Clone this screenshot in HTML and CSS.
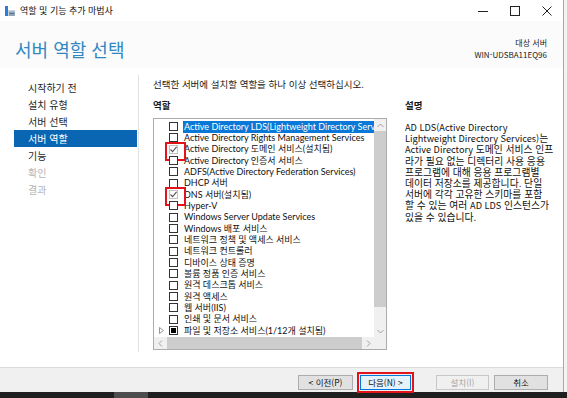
FILE: index.html
```html
<!DOCTYPE html>
<html lang="ko">
<head>
<meta charset="utf-8">
<title>역할 및 기능 추가 마법사</title>
<link rel="stylesheet" href="styles.css">
</head>
<body>
<div class="screen">
  <div class="window">
    <div class="titlebar">
      <svg class="appicon" width="10" height="10" viewBox="0 0 10 10">
        <rect x="0" y="0" width="3" height="10" fill="#2a7fd4"/>
        <rect x="3.5" y="4" width="6.5" height="6" fill="#8fa3b8"/>
        <rect x="3.5" y="4" width="6.5" height="1.5" fill="#c9d5e1"/>
        <rect x="4.5" y="7" width="4.5" height="1" fill="#5e738a"/>
      </svg>
      <span class="title">역할 및 기능 추가 마법사</span>
      <div class="controls">
        <span class="ctl"><svg width="10" height="10" viewBox="0 0 10 10"><line x1="0" y1="5.5" x2="10" y2="5.5" stroke="#222" stroke-width="1"/></svg></span>
        <span class="ctl"><svg width="10" height="10" viewBox="0 0 10 10"><rect x="0.5" y="0.5" width="9" height="9" fill="none" stroke="#222" stroke-width="1"/></svg></span>
        <span class="ctl"><svg width="10" height="10" viewBox="0 0 10 10"><path d="M0.5 0.5 L9.5 9.5 M9.5 0.5 L0.5 9.5" stroke="#222" stroke-width="1"/></svg></span>
      </div>
    </div>

    <div class="header">
      <h1 class="page-title">서버 역할 선택</h1>
      <div class="target">
        <div>대상 서버</div>
        <div>WIN-UDSBA11EQ96</div>
      </div>
    </div>

    <div class="body">
      <nav class="nav">
        <div class="nav-item">시작하기 전</div>
        <div class="nav-item">설치 유형</div>
        <div class="nav-item">서버 선택</div>
        <div class="nav-item active">서버 역할</div>
        <div class="nav-item">기능</div>
        <div class="nav-item disabled">확인</div>
        <div class="nav-item disabled">결과</div>
      </nav>

      <div class="main">
        <p class="instr">선택한 서버에 설치할 역할을 하나 이상 선택하십시오.</p>
        <div class="cols">
          <div class="roles">
            <div class="label">역할</div>
            <div class="listbox">
              <div class="listarea">
                <div class="rows">
                  <div class="row"><span class="exp"></span><span class="cb"></span><span class="txt sel">Active Directory LDS(Lightweight Directory Services)</span></div>
                  <div class="row"><span class="exp"></span><span class="cb"></span><span class="txt">Active Directory Rights Management Services</span></div>
                  <div class="row"><span class="exp"></span><span class="cb checked marked"><svg width="9" height="9" viewBox="0 0 9 9"><path d="M1.5 4.5 L3.6 6.7 L7.6 1.8" fill="none" stroke="#555" stroke-width="1.1"/></svg></span><span class="txt">Active Directory 도메인 서비스(설치됨)</span></div>
                  <div class="row"><span class="exp"></span><span class="cb"></span><span class="txt">Active Directory 인증서 서비스</span></div>
                  <div class="row"><span class="exp"></span><span class="cb"></span><span class="txt">ADFS(Active Directory Federation Services)</span></div>
                  <div class="row"><span class="exp"></span><span class="cb"></span><span class="txt">DHCP 서버</span></div>
                  <div class="row"><span class="exp"></span><span class="cb checked marked"><svg width="9" height="9" viewBox="0 0 9 9"><path d="M1.5 4.5 L3.6 6.7 L7.6 1.8" fill="none" stroke="#555" stroke-width="1.1"/></svg></span><span class="txt">DNS 서버(설치됨)</span></div>
                  <div class="row"><span class="exp"></span><span class="cb"></span><span class="txt">Hyper-V</span></div>
                  <div class="row"><span class="exp"></span><span class="cb"></span><span class="txt">Windows Server Update Services</span></div>
                  <div class="row"><span class="exp"></span><span class="cb"></span><span class="txt">Windows 배포 서비스</span></div>
                  <div class="row"><span class="exp"></span><span class="cb"></span><span class="txt">네트워크 정책 및 액세스 서비스</span></div>
                  <div class="row"><span class="exp"></span><span class="cb"></span><span class="txt">네트워크 컨트롤러</span></div>
                  <div class="row"><span class="exp"></span><span class="cb"></span><span class="txt">디바이스 상태 증명</span></div>
                  <div class="row"><span class="exp"></span><span class="cb"></span><span class="txt">볼륨 정품 인증 서비스</span></div>
                  <div class="row"><span class="exp"></span><span class="cb"></span><span class="txt">원격 데스크톱 서비스</span></div>
                  <div class="row"><span class="exp"></span><span class="cb"></span><span class="txt">원격 액세스</span></div>
                  <div class="row"><span class="exp"></span><span class="cb"></span><span class="txt">웹 서버(IIS)</span></div>
                  <div class="row"><span class="exp"></span><span class="cb"></span><span class="txt">인쇄 및 문서 서비스</span></div>
                  <div class="row"><span class="exp"><svg width="5" height="7" viewBox="0 0 5 7"><path d="M0.5 0.5 L4.5 3.5 L0.5 6.5 Z" fill="none" stroke="#8a8a8a" stroke-width="0.9"/></svg></span><span class="cb partial"><span class="fill"></span></span><span class="txt">파일 및 저장소 서비스(1/12개 설치됨)</span></div>
                </div>
                <div class="vscroll">
                  <span class="sbtn"><svg width="7" height="5" viewBox="0 0 7 5"><path d="M0.5 4 L3.5 1 L6.5 4" fill="none" stroke="#a0a0a0" stroke-width="1"/></svg></span>
                  <span class="vthumb"></span>
                  <span class="vtrack"></span>
                  <span class="sbtn"><svg width="7" height="5" viewBox="0 0 7 5"><path d="M0.5 1 L3.5 4 L6.5 1" fill="none" stroke="#a0a0a0" stroke-width="1"/></svg></span>
                </div>
              </div>
              <div class="hscrollrow">
                <span class="sbtn"><svg width="5" height="7" viewBox="0 0 5 7"><path d="M4 0.5 L1 3.5 L4 6.5" fill="none" stroke="#a0a0a0" stroke-width="1"/></svg></span>
                <span class="hthumb"></span>
                <span class="sbtn"><svg width="5" height="7" viewBox="0 0 5 7"><path d="M1 0.5 L4 3.5 L1 6.5" fill="none" stroke="#a0a0a0" stroke-width="1"/></svg></span>
                <span class="corner"></span>
              </div>
            </div>
          </div>
          <div class="desc">
            <div class="label">설명</div>
            <p class="desc-text"><span class="lat">AD LDS(Active Directory</span><br><span class="lat">Lightweight Directory Services)</span>는<br><span class="lat">Active Directory </span>도메인 서비스 인프<br>라가 필요 없는 디렉터리 사용 응용<br>프로그램에 대해 응용 프로그램별<br>데이터 저장소를 제공합니다. 단일<br>서버에 각각 고유한 스키마를 포함<br>할 수 있는 여러 <span class="lat">AD LDS</span> 인스턴스가<br>있을 수 있습니다.</p>
          </div>
        </div>
      </div>
    </div>

    <div class="footer">
      <button class="btn b-prev">&lt; 이전(P)</button>
      <button class="btn b-next">다음(N) &gt;</button>
      <button class="btn b-install" disabled>설치(I)</button>
      <button class="btn b-cancel">취소</button>
    </div>
  </div>
  <div class="edge"></div>
</div>
<div class="taskbar"><span class="task-item"></span></div>
</body>
</html>
```
FILE: styles.css
```css
* { box-sizing: border-box; }
html, body { margin: 0; padding: 0; }
body {
  width: 567px;
  height: 398px;
  overflow: hidden;
  background: #f3f3f3;
  font-family: "Noto Sans CJK KR", "Noto Sans", sans-serif;
  font-size: 9px;
  color: #1a1a1a;
}
.screen { display: flex; height: 392px; }
.window {
  width: 564px;
  height: 392px;
  border-right: 1px solid #a8a8a8;
  background: #fff;
  display: flex;
  flex-direction: column;
}
.edge { flex: 1; background: #f3f3f3; }

/* title bar */
.titlebar {
  height: 21px;
  display: flex;
  align-items: center;
  background: #fff;
}
.appicon { margin-left: 5px; margin-top: 1px; }
.title { margin-left: 5px; font-size: 9px; color: #111; }
.controls { margin-left: auto; display: flex; }
.ctl {
  width: 32px;
  height: 21px;
  display: flex;
  align-items: center;
  justify-content: center;
}

/* header */
.header {
  height: 47px;
  display: flex;
  justify-content: space-between;
  background: #fbfbfb;
}
.page-title {
  margin: 0;
  padding: 16px 0 0 15px;
  font-size: 18px;
  line-height: 24px;
  font-weight: normal;
  color: #2f87c3;
}
.target {
  padding: 16px 16px 0 0;
  text-align: right;
  line-height: 12px;
  font-size: 8px;
  color: #222;
}

/* body */
.body {
  height: 299px;
  display: flex;
}
.nav {
  width: 139px;
  margin: 7px 0 15px;
  padding-top: 4px;
  border-right: 1px solid #e2e2e2;
}
.nav-item {
  margin-left: 14px;
  width: 123px;
  height: 17px;
  line-height: 17px;
  padding-left: 14px;
  font-size: 10px;
  color: #1e1e1e;
}
.nav-item.active { background: #0a66b3; color: #fff; }
.nav-item.disabled { color: #b5b5b5; }

.main {
  flex: 1;
  padding: 10px 0 0 14px;
}
.instr { margin: 0; line-height: 12px; font-size: 9.5px; }
.cols { display: flex; margin-top: 9px; }
.label { line-height: 12px; font-weight: bold; font-size: 9.5px; }
.roles { width: 234px; flex: none; }
.listbox {
  margin-top: 7px;
  height: 232px;
  border: 1px solid #acacac;
  display: flex;
  flex-direction: column;
}
.listarea { height: 218px; display: flex; }
.rows {
  flex: 1;
  min-width: 0;
  overflow: hidden;
  padding-top: 2px;
  white-space: nowrap;
  font-family: Lato, "Noto Sans CJK KR", sans-serif;
  font-size: 9px;
}
.row {
  height: 11.33px;
  display: flex;
  align-items: center;
  padding-left: 4px;
}
.exp {
  flex: none;
  width: 11px;
  height: 9px;
  display: flex;
  align-items: center;
  padding-left: 1px;
}
.cb {
  position: relative;
  width: 9px;
  height: 9px;
  border: 1px solid #333;
  background: #fff;
  flex: none;
  display: flex;
  align-items: center;
  justify-content: center;
}
.cb.checked { border-color: #c4c4c4; }
.cb svg { position: absolute; left: -1px; top: -1px; }
.cb.marked::after {
  content: "";
  position: absolute;
  left: -5px;
  top: -4px;
  width: 17px;
  height: 15px;
  border: 2px solid #e3131b;
}
.cb.partial .fill { width: 5px; height: 5px; background: #000; }
.txt {
  flex: none;
  margin-left: 5px;
  padding: 0 1px;
  line-height: 12px;
  color: #111;
}
.txt.sel { background: #0a78d7; color: #fff; }

.vscroll {
  width: 12px;
  flex: none;
  display: flex;
  flex-direction: column;
  background: #f0f0f0;
}
.sbtn {
  width: 12px;
  height: 12px;
  flex: none;
  display: flex;
  align-items: center;
  justify-content: center;
  background: #f0f0f0;
}
.vthumb { height: 176px; background: #cdcdcd; }
.vtrack { flex: 1; }
.hscrollrow {
  height: 12px;
  display: flex;
  background: #f0f0f0;
}
.hthumb { flex: 1; background: #cdcdcd; margin-left: 1px; }
.corner { width: 12px; background: #f0f0f0; }

.desc { margin-left: 18px; }
.desc-text {
  margin: 11px 0 0;
  line-height: 11.2px;
  font-size: 9.8px;
  white-space: nowrap;
  color: #111;
}
.desc-text .lat { font-size: 9.2px; }

/* footer */
.footer {
  height: 25px;
  border-top: 1px solid #dcdcdc;
  background: #f0f0f0;
  display: flex;
  align-items: flex-start;
  padding-top: 7px;
  padding-left: 298px;
}
.btn {
  height: 15px;
  padding: 0;
  font-family: inherit;
  font-size: 8.5px;
  line-height: 13px;
  color: #111;
  background: #e1e1e1;
  border: 1px solid #adadad;
}
.b-prev { width: 55px; }
.b-next {
  width: 51px;
  margin-left: 7px;
  border-color: #0078d7;
  background: #e5f1fb;
  outline: 2px solid #e3131b;
  outline-offset: 1px;
}
.b-install {
  width: 53px;
  margin-left: 25px;
  color: #a3a3a3;
  background: #f0f0f0;
  border-color: #c8c8c8;
}
.b-cancel { width: 54px; margin-left: 5px; }

.taskbar {
  height: 6px;
  background: #1f1f1f;
  display: flex;
}
.task-item { margin-left: 114px; width: 34px; background: #4d4d4d; }
```
